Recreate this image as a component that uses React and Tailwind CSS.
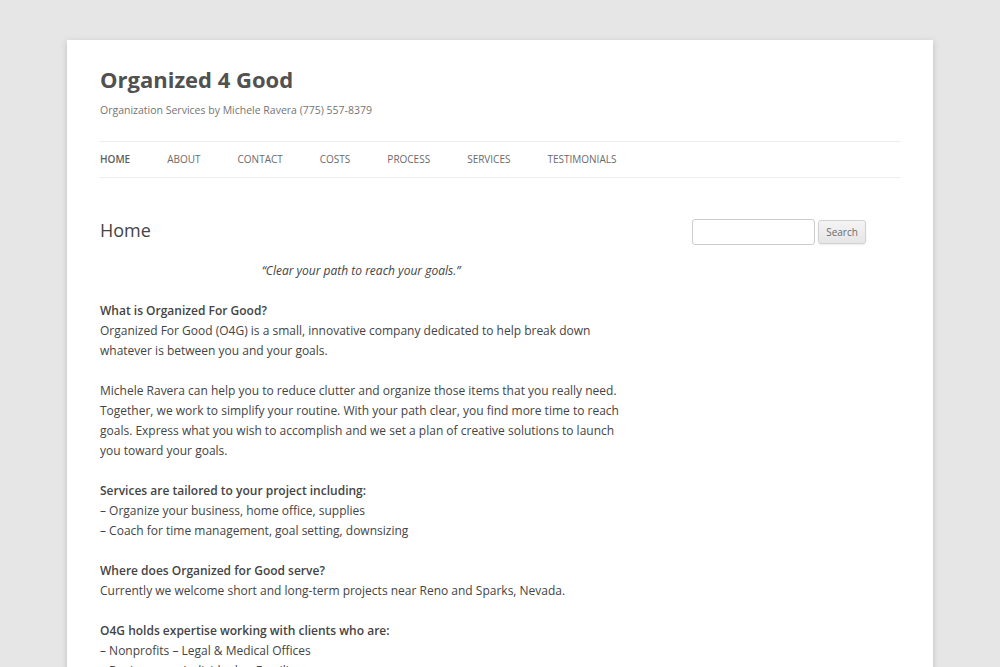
const navItems = ["Home", "About", "Contact", "Costs", "Process", "Services", "Testimonials"];

function SiteHeader() {
  return (
    <header className="pt-6">
      <h1 className="text-[22px] leading-[31px] font-bold text-[#515151]">Organized 4 Good</h1>
      <p className="mt-[3px] text-[10.5px] leading-[24px] text-[#757575]">
        Organization Services by Michele Ravera (775) 557-8379
      </p>
      <nav className="mt-[19px] border-y border-[#ededed]">
        <ul className="flex gap-[37px] text-[10px] leading-[35px] uppercase">
          {navItems.map((item, i) => (
            <li key={item}>
              <a href="#" className={i === 0 ? "font-semibold text-[#5e5e5e]" : "text-[#6a6a6a]"}>
                {item}
              </a>
            </li>
          ))}
        </ul>
      </nav>
    </header>
  );
}

function Entry() {
  return (
    <article className="w-[522px] text-[12px] leading-[20px] text-[#444] [&_strong]:font-semibold">
      <h2 className="text-[18px] leading-[24px] text-[#444] mb-[19px]">Home</h2>
      <p className="text-center italic mb-5">“Clear your path to reach your goals.”</p>
      <p className="mb-5">
        <strong>What is Organized For Good?</strong>
        <br />
        Organized For Good (O4G) is a small, innovative company dedicated to help break down whatever is between
        you and your goals.
      </p>
      <p className="mb-5">
        Michele Ravera can help you to reduce clutter and organize those items that you really need. Together, we
        work to simplify your routine. With your path clear, you find more time to reach goals. Express what you
        wish to accomplish and we set a plan of creative solutions to launch you toward your goals.
      </p>
      <p className="mb-5">
        <strong>Services are tailored to your project including:</strong>
        <br />– Organize your business, home office, supplies
        <br />– Coach for time management, goal setting, downsizing
      </p>
      <p className="mb-5">
        <strong>Where does Organized for Good serve?</strong>
        <br />
        Currently we welcome short and long-term projects near Reno and Sparks, Nevada.
      </p>
      <p className="mb-5">
        <strong>O4G holds expertise working with clients who are:</strong>
        <br />– Nonprofits – Legal &amp; Medical Offices
        <br />– Businesses – Individuals – Families
      </p>
    </article>
  );
}

function Sidebar() {
  return (
    <aside className="pt-px">
      <form className="flex items-center gap-[3px]" onSubmit={(e) => e.preventDefault()}>
        <input
          type="text"
          className="w-[123px] h-[26px] border border-[#ccc] rounded-[3px] bg-white px-2 text-[12px] outline-none"
        />
        <button
          type="submit"
          className="w-[48px] h-[24px] text-[10px] text-[#6a6a6a] border border-[#d2d2d2] rounded-[3px] bg-gradient-to-b from-[#f4f4f4] to-[#e6e6e6] shadow-[0_1px_2px_rgba(64,64,64,0.1)]"
        >
          Search
        </button>
      </form>
    </aside>
  );
}

export default function App() {
  return (
    <div className="min-h-screen bg-[#e6e6e6] pt-10 pb-12" style={{ fontFamily: '"Open Sans", "Liberation Sans", sans-serif' }}>
      <div className="mx-auto w-[866px] bg-white px-[33px] pb-10 shadow-[0_2px_6px_rgba(100,100,100,0.3)]">
        <SiteHeader />
        <div className="mt-10 flex justify-between">
          <Entry />
          <div className="w-[208px]">
            <Sidebar />
          </div>
        </div>
      </div>
    </div>
  );
}
